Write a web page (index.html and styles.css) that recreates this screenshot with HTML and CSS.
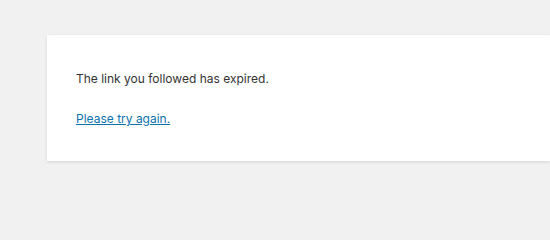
FILE: index.html
```html
<!DOCTYPE html>
<html lang="en">
<head>
<meta charset="utf-8">
<title>Something went wrong</title>
<link rel="stylesheet" href="styles.css">
</head>
<body class="page">
  <div class="card">
    <p class="message">The link you followed has expired.</p>
    <p class="message"><a class="retry" href="#">Please try again.</a></p>
  </div>
</body>
</html>
```

FILE: styles.css
```css
html, body {
  margin: 0;
  padding: 0;
}

.page {
  background: #f1f1f1;
  font-family: Inter, "Liberation Sans", Arial, sans-serif;
  font-size: 12px;
  line-height: 18px;
  color: #333;
  padding-top: 35px;
  padding-left: 47px;
  overflow: hidden;
  height: 235px;
  box-sizing: border-box;
}

.card {
  background: #fff;
  padding: 35px 29px 33px;
  display: flex;
  flex-direction: column;
  gap: 22px;
  box-shadow: 0 1px 3px rgba(0, 0, 0, 0.13);
}

.message {
  margin: 0;
}

.retry {
  color: #0e72ad;
  text-decoration: underline;
}
```
